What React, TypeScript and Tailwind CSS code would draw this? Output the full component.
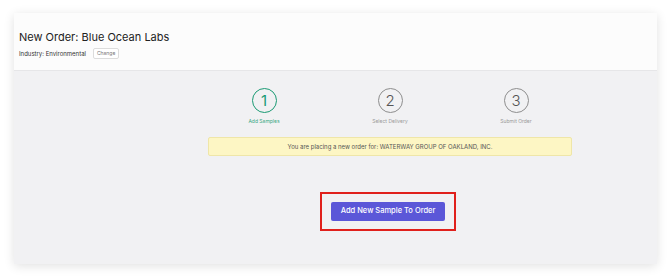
import React from "react";

const steps = [
  { n: 1, label: "Add Samples", active: true },
  { n: 2, label: "Select Delivery", active: false },
  { n: 3, label: "Submit Order", active: false },
];

const App = () => {
  return (
    <div
      className="w-[670px] h-[277px] bg-white pt-[13px] px-[14px]"
      style={{ fontFamily: "Inter, 'Liberation Sans', sans-serif" }}
    >
      <div className="w-[643px] h-[251px] flex flex-col shadow-[0_2px_10px_rgba(0,0,0,0.12)]">
        <div className="h-[58px] bg-[#fcfcfc] border-b border-[#e6e6e8] px-[5px] pt-[16px]">
          <h1 className="text-[11px] leading-[16px] text-[#222]">
            New Order: Blue Ocean Labs
          </h1>
          <div className="flex items-center gap-[7px] mt-[3px]">
            <span className="text-[6px] text-[#333]">Industry: Environmental</span>
            <button className="h-[11px] px-[3px] border border-[#dcdcdc] rounded-[2px] bg-white text-[5px] leading-[9px] text-[#777]">
              Change
            </button>
          </div>
        </div>

        <div className="flex-1 bg-[#f1f1f3] pt-[17px]">
          <div className="ml-[187px] w-[378px] grid grid-cols-3">
            {steps.map((s) => (
              <div key={s.n} className="flex flex-col items-center">
                <div
                  className={`w-[25px] h-[25px] rounded-full flex items-center justify-center text-[15px] font-light leading-none ${
                    s.active
                      ? "border-[1.5px] border-[#1a9a73] text-[#1a9a73] font-normal"
                      : "border border-[#8e8e8e] text-[#555]"
                  }`}
                >
                  {s.n}
                </div>
                <span
                  className={`mt-[5px] text-[5px] ${
                    s.active ? "text-[#3aa883]" : "text-[#9a9a9a]"
                  }`}
                >
                  {s.label}
                </span>
              </div>
            ))}
          </div>

          <div className="ml-[194px] mt-[11px] w-[364px] h-[19px] bg-[#fdf6c4] border border-[#efe6a8] rounded-[2px] flex items-center justify-center text-[6px] text-[#555]">
            You are placing a new order for: WATERWAY GROUP OF OAKLAND, INC.
          </div>

          <div className="ml-[306px] mt-[36px] w-[136px] h-[39px] border-2 border-[#e0201b] flex items-center justify-center">
            <button className="w-[114px] h-[19px] rounded-[2px] bg-[#5b57d8] text-white text-[7.5px] font-medium">
              Add New Sample To Order
            </button>
          </div>
        </div>
      </div>
    </div>
  );
};

export default App;
